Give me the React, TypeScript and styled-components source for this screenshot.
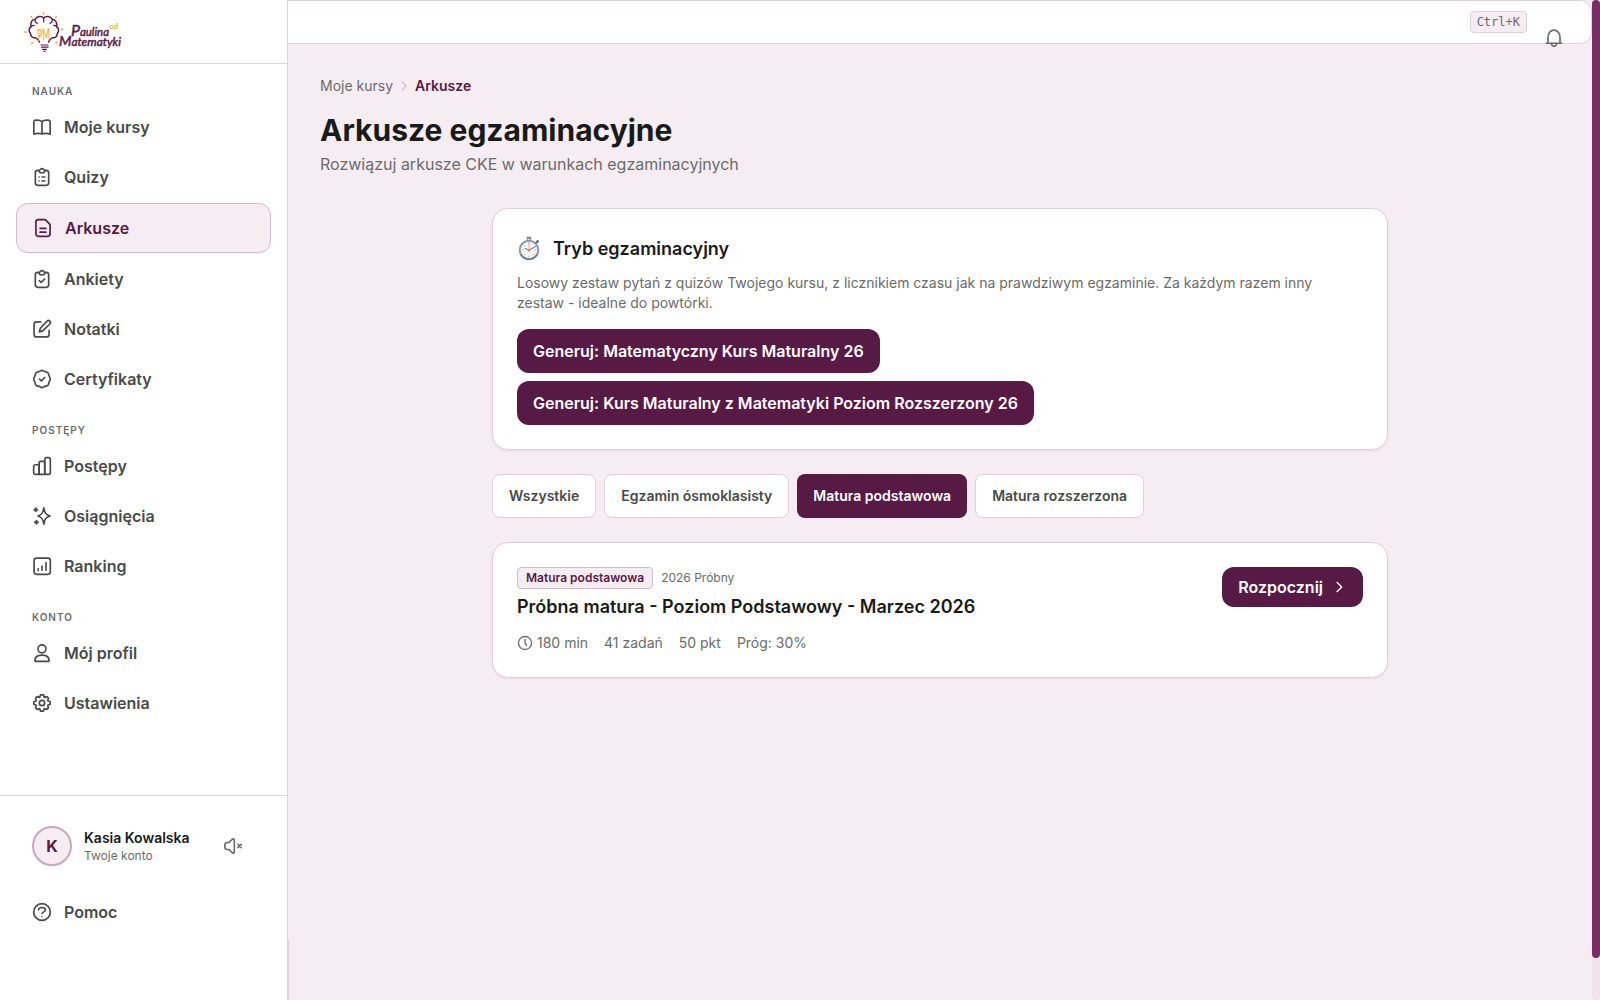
import React from "react";
import styled, { createGlobalStyle, css } from "styled-components";

const c = {
  bg: "#f6edf2",
  plum: "#571a45",
  line: "#e0d0da",
  lineStrong: "#d4bccd",
  ink: "#1a1a1a",
  text: "#4a4a4a",
  muted: "#6b6b6b",
  orange: "#f5a83a",
};

const Global = createGlobalStyle`
  *, *::before, *::after { box-sizing: border-box; }
  html, body { margin: 0; padding: 0; background: ${c.bg}; overflow: hidden; }
  body { font-family: Inter, "Noto Sans", sans-serif; font-size: 16px; line-height: 24px; color: ${c.ink}; }
  button { font: inherit; border: 0; margin: 0; cursor: pointer; }
  h1, h2, h3, p { margin: 0; }
`;

const Shell = styled.div`
  display: grid;
  grid-template-columns: 288px 1fr 8px;
  width: 100%;
  height: 1000px;
  background: ${c.bg};
`;

const Sidebar = styled.aside`
  display: flex;
  flex-direction: column;
  background: #fff;
  border-right: 1px solid ${c.line};
`;

const Brand = styled.div`
  height: 64px;
  flex: none;
  padding: 12px 24px;
  border-bottom: 1px solid ${c.line};
  svg { display: block; }
`;

const Nav = styled.nav`
  flex: 1;
  display: flex;
  flex-direction: column;
  gap: 19px;
  padding: 19px 16px 0;
`;

const Section = styled.div`
  display: flex;
  flex-direction: column;
  gap: 2px;
`;

const SectionLabel = styled.div`
  font-size: 10px;
  line-height: 16px;
  font-weight: 600;
  letter-spacing: 1px;
  color: ${c.muted};
  padding: 0 16px;
  margin-bottom: 2px;
`;

const NavItem = styled.a<{ $active?: boolean }>`
  display: flex;
  align-items: center;
  gap: 12px;
  height: 48px;
  padding: 0 16px;
  border-radius: 12px;
  font-weight: 600;
  color: ${c.text};
  svg { flex: none; }
  ${(p) =>
    p.$active &&
    css`
      height: 50px;
      color: ${c.plum};
      background: ${c.bg};
      border: 1px solid ${c.lineStrong};
      box-shadow: 0 1px 2px rgba(87, 26, 69, 0.06);
    `}
`;

const Footer = styled.div`
  height: 205px;
  flex: none;
  border-top: 1px solid ${c.line};
  padding: 22px 16px 0;
`;

const Account = styled.div`
  display: flex;
  align-items: center;
  gap: 12px;
  height: 56px;
  padding: 0 16px;
`;

const Avatar = styled.div`
  width: 40px;
  height: 40px;
  border-radius: 50%;
  border: 2px solid #c8a8c0;
  background: ${c.bg};
  color: ${c.plum};
  display: flex;
  align-items: center;
  justify-content: center;
  font-weight: 700;
`;

const AccountText = styled.div`
  flex: 1;
`;
const AccountName = styled.div`
  font-size: 14px;
  line-height: 20px;
  font-weight: 600;
`;
const AccountSub = styled.div`
  font-size: 12px;
  line-height: 16px;
  color: ${c.muted};
`;
const IconSlot = styled.div`
  display: flex;
  color: ${c.muted};
  margin-right: 12px;
`;
const HelpRow = styled.div`
  margin-top: 14px;
`;

const Main = styled.div`
  display: flex;
  flex-direction: column;
  min-width: 0;
`;

const TopBar = styled.header`
  height: 44px;
  flex: none;
  display: flex;
  justify-content: flex-end;
  align-items: flex-start;
  gap: 17px;
  padding: 10px 27px 0 0;
  background: #fff;
  border: 1px solid ${c.line};
  border-left: 0;
  border-radius: 0 12px 12px 0;
`;

const Kbd = styled.kbd`
  font-family: "DejaVu Sans Mono", monospace;
  font-size: 12px;
  line-height: 16px;
  padding: 2px 6px;
  color: ${c.muted};
  background: ${c.bg};
  border: 1px solid ${c.line};
  border-radius: 4px;
`;

const BellSlot = styled.div`
  display: flex;
  margin-top: 17px;
  color: ${c.muted};
`;

const Content = styled.main`
  flex: 1;
  padding: 32px 32px 0;
`;

const Seam = styled.div`
  height: 60px;
  flex: none;
  border-left: 1px solid ${c.line};
`;

const Crumbs = styled.div`
  display: flex;
  align-items: center;
  gap: 4px;
  font-size: 14px;
  line-height: 20px;
  color: ${c.muted};
  svg { color: #d0b9c9; }
  b { font-weight: 600; color: ${c.plum}; }
`;

const Title = styled.h1`
  margin-top: 16px;
  font-size: 30px;
  line-height: 36px;
  font-weight: 700;
`;

const Subtitle = styled.p`
  margin-top: 4px;
  color: ${c.muted};
`;

const Column = styled.div`
  width: 896px;
  margin: 32px auto 0;
  display: flex;
  flex-direction: column;
  gap: 24px;
`;

const Card = styled.section`
  padding: 24px;
  background: #fff;
  border: 1px solid ${c.line};
  border-radius: 16px;
  box-shadow: 0 1px 3px rgba(87, 26, 69, 0.08);
`;

const CardHead = styled.div`
  display: flex;
  align-items: center;
  gap: 12px;
  height: 32px;
`;

const Heading = styled.h2`
  font-size: 18px;
  line-height: 28px;
  font-weight: 600;
`;

const Lead = styled.p`
  margin-top: 8px;
  font-size: 14px;
  line-height: 20px;
  color: ${c.muted};
`;

const Actions = styled.div`
  display: flex;
  flex-direction: column;
  align-items: flex-start;
  gap: 8px;
  margin-top: 16px;
`;

const Primary = styled.button<{ $compact?: boolean }>`
  display: flex;
  align-items: center;
  gap: 8px;
  height: ${(p) => (p.$compact ? 40 : 44)}px;
  padding: 0 16px;
  border-radius: 12px;
  background: ${c.plum};
  color: #fff;
  font-weight: 600;
  white-space: nowrap;
`;

const Tabs = styled.div`
  display: flex;
  gap: 8px;
`;

const Tab = styled.button<{ $active?: boolean }>`
  height: 44px;
  padding: 0 16px;
  border-radius: 8px;
  font-size: 14px;
  line-height: 20px;
  font-weight: 600;
  background: ${(p) => (p.$active ? c.plum : "#fff")};
  color: ${(p) => (p.$active ? "#fff" : c.text)};
  border: ${(p) => (p.$active ? "0" : `1px solid ${c.line}`)};
`;

const Exam = styled(Card)`
  display: flex;
  justify-content: space-between;
  align-items: flex-start;
`;

const Tags = styled.div`
  display: flex;
  align-items: center;
  gap: 8px;
  font-size: 12px;
  line-height: 16px;
  color: ${c.muted};
`;

const Badge = styled.span`
  padding: 2px 8px;
  border: 1px solid ${c.lineStrong};
  border-radius: 4px;
  background: ${c.bg};
  color: ${c.plum};
  font-weight: 600;
`;

const ExamTitle = styled.h3`
  margin-top: 4px;
  font-size: 18px;
  line-height: 28px;
  font-weight: 600;
`;

const Meta = styled.div`
  display: flex;
  gap: 16px;
  margin-top: 12px;
  font-size: 14px;
  line-height: 20px;
  color: ${c.muted};
  span { display: flex; align-items: center; gap: 4px; }
`;

const Track = styled.div`
  background: #eee4e9;
  border-radius: 4px;
`;
const Thumb = styled.div`
  height: 958px;
  border-radius: 4px;
  background: #782d64;
`;

const Icon = ({ children, size = 20, width = 2 }: { children: React.ReactNode; size?: number; width?: number }) => (
  <svg width={size} height={size} viewBox="0 0 24 24" fill="none" stroke="currentColor" strokeWidth={width} strokeLinecap="round" strokeLinejoin="round">
    {children}
  </svg>
);

const clipboard = (
  <>
    <path d="M8.300 4H7a3 3 0 0 0-3 3v12a3 3 0 0 0 3 3h10a3 3 0 0 0 3-3V7a3 3 0 0 0-3-3h-1.300" />
    <path d="M8.300 4.200C9.700 4 9.900 2 12 2s2.300 2 3.700 2.200C15.500 6 14.500 7.200 12 7.200S8.500 6 8.300 4.200z" />
  </>
);

const icons: Record<string, React.ReactNode> = {
  book: (
    <path d="M12 5.500v14.700M12 5.500C10.500 4 8 3.400 4.500 3.800 3.200 4 2.200 4.700 2.200 6v14.500c2.800-.9 7.300-1 9.800-.3 2.500-.7 7-.6 9.800.3V6c0-1.300-1-2-2.300-2.200C16 3.400 13.500 4 12 5.500z" />
  ),
  quiz: (
    <>
      {clipboard}
      <path d="M8.400 12h.1M12 12h3.500M8.400 16.800h.1M12 16.800h3.500" />
    </>
  ),
  file: (
    <>
      <path d="M13.500 2H6.500A3 3 0 0 0 3.500 5v14a3 3 0 0 0 3 3h11a3 3 0 0 0 3-3V9.100a3 3 0 0 0-.8-2.100L15.700 2.900A3 3 0 0 0 13.500 2z" />
      <path d="M8.500 12.500h7M8.500 17h7" />
    </>
  ),
  survey: (
    <>
      {clipboard}
      <path d="M8.800 14l2.200 2 4.200-4" />
    </>
  ),
  note: (
    <>
      <path d="M10.500 3.500H5.500a3 3 0 0 0-3 3v12a3 3 0 0 0 3 3h12a3 3 0 0 0 3-3v-5" />
      <path d="M18 2.600a2.400 2.400 0 0 1 3.400 3.400l-8.400 8.200-4.200 1.200 1.200-4.300z" />
    </>
  ),
  certificate: (
    <>
      <path d="M9.800 2.500Q12 .9 14.200 2.500 15 3.100 17 3.400 19.600 3.700 20 6.300 20.300 8.200 21 9.200 22.800 12 21 14.800 20.300 15.800 20 17.700 19.600 20.300 17 20.600 15 20.900 14.200 21.500 12 23.100 9.800 21.500 9 20.900 7 20.600 4.400 20.300 4 17.700 3.700 15.800 3 14.800 1.200 12 3 9.200 3.700 8.200 4 6.300 4.400 3.700 7 3.400 9 3.100 9.800 2.500z" />
      <path d="M9 12.200l2.200 2 4-4" />
    </>
  ),
  progress: (
    <>
      <path d="M8.500 22H4.200A2 2 0 0 1 2 20v-7.500a2 2 0 0 1 2-2h4.500z" />
      <path d="M8.500 22V8.500a2 2 0 0 1 2-2h4.800V22z" />
      <path d="M15.300 22V4a2 2 0 0 1 2-2H20a2 2 0 0 1 2 2v16a2 2 0 0 1-2 2z" />
    </>
  ),
  sparkles: (
    <>
      <path d="M14.200 2.200c.8 5.800 2.200 8.200 7.600 9.800-5.400 1.600-6.800 4-7.600 9.800-.8-5.800-2.200-8.200-7-9.800 4.800-1.600 6.200-4 7-9.800z" />
      <path d="M4.500 2.800v3.600M2.700 4.600h3.600M5.300 17.600v3.600M3.500 19.400h3.600" strokeWidth="2.400" />
    </>
  ),
  ranking: (
    <>
      <rect x="2.500" y="2.500" width="19.500" height="19.500" rx="3" />
      <path d="M7.500 15v2M12 12v5M16.800 8v9" />
    </>
  ),
  profile: (
    <>
      <circle cx="12" cy="7" r="4.800" />
      <path d="M3.500 21.200c0-4 3-6.700 8.500-6.700s8.500 2.700 8.500 6.700c0 .5-.3.800-.8.800H4.300c-.5 0-.8-.3-.8-.8z" />
    </>
  ),
  settings: (
    <>
      <path d="M10.300 2.300h3.400l1.100 2.900 3-.9 1.900 1.900-.9 3 3.100 1.300v3l-3.100 1.300.9 3-1.900 1.900-3-.9-1.100 2.900h-3.400l-1.100-2.900-3 .9-1.900-1.900.9-3-3.100-1.300v-3l3.100-1.300-.9-3 1.900-1.900 3 .9z" />
      <circle cx="12" cy="12" r="3.200" />
    </>
  ),
  help: (
    <>
      <circle cx="12" cy="12" r="10" />
      <path d="M7.800 9.600c.3-1.800 2-2.900 4.200-2.900 2.400 0 4.200 1.100 4.200 3 0 2.400-4.200 2-4.200 4.500M12 17.600v.1" strokeWidth="1.800" />
    </>
  ),
  mute: (
    <>
      <path d="M10.800 4.200C12.200 3.100 13.600 3 13.600 5v14c0 2-1.400 1.900-2.800.8L7.300 16.300C4.500 16.300 2.300 16 2.300 14v-4c0-2 2.200-2.300 5-2.300z" />
      <path d="M18 10l4 4M22 10l-4 4" />
    </>
  ),
  bell: (
    <>
      <path d="M2.800 18.300H21.200M4.800 18V11c0-4.500 3-8.500 7.200-8.500s7.200 4 7.200 8.500v7" />
      <path d="M8.800 18.800c.5 2 1.600 3.200 3.200 3.200s2.700-1.200 3.200-3.200" />
    </>
  ),
  clock: (
    <>
      <circle cx="12" cy="12" r="9.800" />
      <path d="M12 6.500V12l2.500 3.500" />
    </>
  ),
};

const Stopwatch = () => (
  <svg width="24" height="26" viewBox="0 0 24 26" fill="none" strokeLinecap="round">
    <path d="M10.300 3.200V1.400h3.400v1.800" fill="#8b949c" stroke="#7b858e" strokeWidth="1.200" />
    <path d="M19.300 6.700l1.600-1.500" stroke="#5f6b76" strokeWidth="2.400" />
    <circle cx="12" cy="14" r="9.300" fill="#f5f5f3" stroke="#8d98a3" strokeWidth="2" />
    <path d="M4 18.600a9.300 9.300 0 0 0 16 0" stroke="#75828e" strokeWidth="1.600" />
    <path d="M12 7v1M12 20v1M5.200 14h1M17.800 14h1M7.200 9.200l.6.600M16.200 18.200l.6.600M7.200 18.800l.6-.6" stroke="#a0a5a8" strokeWidth=".8" />
    <path d="M12 6.500V16" stroke="#f0a08a" strokeWidth=".9" />
    <path d="M8 12.400l4 1.900 6.500-3.800" stroke="#5f666b" strokeWidth="1" />
    <circle cx="12" cy="14.200" r="1" fill="#e98263" />
  </svg>
);

const Logo = () => (
  <svg width="100" height="40" viewBox="0 0 100 40" fill="none" strokeLinecap="round" strokeLinejoin="round">
    <g stroke="#5a1d4b" strokeWidth="1.500">
      <path d="M15.500 30c-.6-2.300-2-3.200-4-4.200-3 .2-5-1.500-5-4.300-2.500-2.500-1.500-6 .8-7C6 10.500 8 7.500 11.300 7.300c1.400-3 6-4 8.400-1.200 2.400-2.800 7-1.800 8.400 1.200 3.300.2 5.200 3.200 4.400 7.200 2.300 1.500 3 4.500.8 7-.2 2.800-2 4.500-5 4.300-2 1-3.200 2-3.800 4.200" />
      <path d="M11.300 7.300c-.6 2 .3 3.600 2.200 4M19.700 6.100v4M28.100 7.300c.6 2-.3 3.600-2.200 4M7.300 14.500c.8-.8 2-1.200 3-1M32.500 14.500c-.8-.8-2-1.200-3-1" strokeWidth="1.200" />
      <path d="M17 33h7M17.500 35.200h6.500M18.500 37.300h4M20 39.200h1" strokeWidth="1.200" />
    </g>
    <path d="M19.500.800v1.500M7 4.500l1 1M32.500 4.500l-1 1M.8 20l1.500.3M7.500 31.500l1-1M33 31l-1-.8M37.500 17.500l1.300-.3" stroke={c.orange} strokeWidth="1.500" />
    <g fontFamily="Lato, Inter, sans-serif" fontStyle="italic">
      <text x="13" y="28" fontSize="16" fill={c.orange} stroke={c.orange} strokeWidth=".2" textLength="13" lengthAdjust="spacingAndGlyphs" transform="rotate(-8 20 22)">PM</text>
      <g fill="#5a1d4b" stroke="#5a1d4b" strokeWidth=".5" fontWeight="400">
        <text x="47" y="24" fontSize="11.500" textLength="38" lengthAdjust="spacingAndGlyphs"><tspan fontSize="16">P</tspan>aulina</text>
        <text x="35" y="34" fontSize="11.500" textLength="62" lengthAdjust="spacingAndGlyphs"><tspan fontSize="14">M</tspan>atematyki</text>
      </g>
      <text x="85.500" y="17" fontSize="8" fill={c.orange} fontStyle="normal" fontWeight="700" textLength="8.500" lengthAdjust="spacingAndGlyphs">od</text>
    </g>
  </svg>
);

const sections = [
  {
    label: "NAUKA",
    items: [
      ["book", "Moje kursy"],
      ["quiz", "Quizy"],
      ["file", "Arkusze"],
      ["survey", "Ankiety"],
      ["note", "Notatki"],
      ["certificate", "Certyfikaty"],
    ],
  },
  {
    label: "POSTĘPY",
    items: [
      ["progress", "Postępy"],
      ["sparkles", "Osiągnięcia"],
      ["ranking", "Ranking"],
    ],
  },
  {
    label: "KONTO",
    items: [
      ["profile", "Mój profil"],
      ["settings", "Ustawienia"],
    ],
  },
];

const filters = ["Wszystkie", "Egzamin ósmoklasisty", "Matura podstawowa", "Matura rozszerzona"];

export default function App() {
  return (
    <>
      <Global />
      <Shell>
        <Sidebar>
          <Brand>
            <Logo />
          </Brand>
          <Nav>
            {sections.map((s) => (
              <Section key={s.label}>
                <SectionLabel>{s.label}</SectionLabel>
                {s.items.map(([icon, label]) => (
                  <NavItem key={label} $active={label === "Arkusze"}>
                    <Icon>{icons[icon]}</Icon>
                    {label}
                  </NavItem>
                ))}
              </Section>
            ))}
          </Nav>
          <Footer>
            <Account>
              <Avatar>K</Avatar>
              <AccountText>
                <AccountName>Kasia Kowalska</AccountName>
                <AccountSub>Twoje konto</AccountSub>
              </AccountText>
              <IconSlot>
                <Icon>{icons.mute}</Icon>
              </IconSlot>
            </Account>
            <HelpRow>
              <NavItem>
                <Icon>{icons.help}</Icon>
                Pomoc
              </NavItem>
            </HelpRow>
          </Footer>
        </Sidebar>
        <Main>
          <TopBar>
            <Kbd>Ctrl+K</Kbd>
            <BellSlot>
              <Icon>{icons.bell}</Icon>
            </BellSlot>
          </TopBar>
          <Content>
            <Crumbs>
              <span>Moje kursy</span>
              <Icon size={14} width={2}>
                <path d="M9 5l6.500 7L9 19" />
              </Icon>
              <b>Arkusze</b>
            </Crumbs>
            <Title>Arkusze egzaminacyjne</Title>
            <Subtitle>Rozwiązuj arkusze CKE w warunkach egzaminacyjnych</Subtitle>
            <Column>
              <Card>
                <CardHead>
                  <Stopwatch />
                  <Heading>Tryb egzaminacyjny</Heading>
                </CardHead>
                <Lead>
                  Losowy zestaw pytań z quizów Twojego kursu, z licznikiem czasu jak na prawdziwym egzaminie. Za każdym razem
                  inny zestaw - idealne do powtórki.
                </Lead>
                <Actions>
                  <Primary>Generuj: Matematyczny Kurs Maturalny 26</Primary>
                  <Primary>Generuj: Kurs Maturalny z Matematyki Poziom Rozszerzony 26</Primary>
                </Actions>
              </Card>
              <Tabs>
                {filters.map((f) => (
                  <Tab key={f} $active={f === "Matura podstawowa"}>
                    {f}
                  </Tab>
                ))}
              </Tabs>
              <Exam>
                <div>
                  <Tags>
                    <Badge>Matura podstawowa</Badge>
                    <span>2026 Próbny</span>
                  </Tags>
                  <ExamTitle>Próbna matura - Poziom Podstawowy - Marzec 2026</ExamTitle>
                  <Meta>
                    <span>
                      <Icon size={16}>{icons.clock}</Icon>
                      180 min
                    </span>
                    <span>41 zadań</span>
                    <span>50 pkt</span>
                    <span>Próg: 30%</span>
                  </Meta>
                </div>
                <Primary $compact>
                  Rozpocznij
                  <Icon size={16} width={2}>
                    <path d="M9 5l7 7-7 7" />
                  </Icon>
                </Primary>
              </Exam>
            </Column>
          </Content>
          <Seam />
        </Main>
        <Track>
          <Thumb />
        </Track>
      </Shell>
    </>
  );
}
